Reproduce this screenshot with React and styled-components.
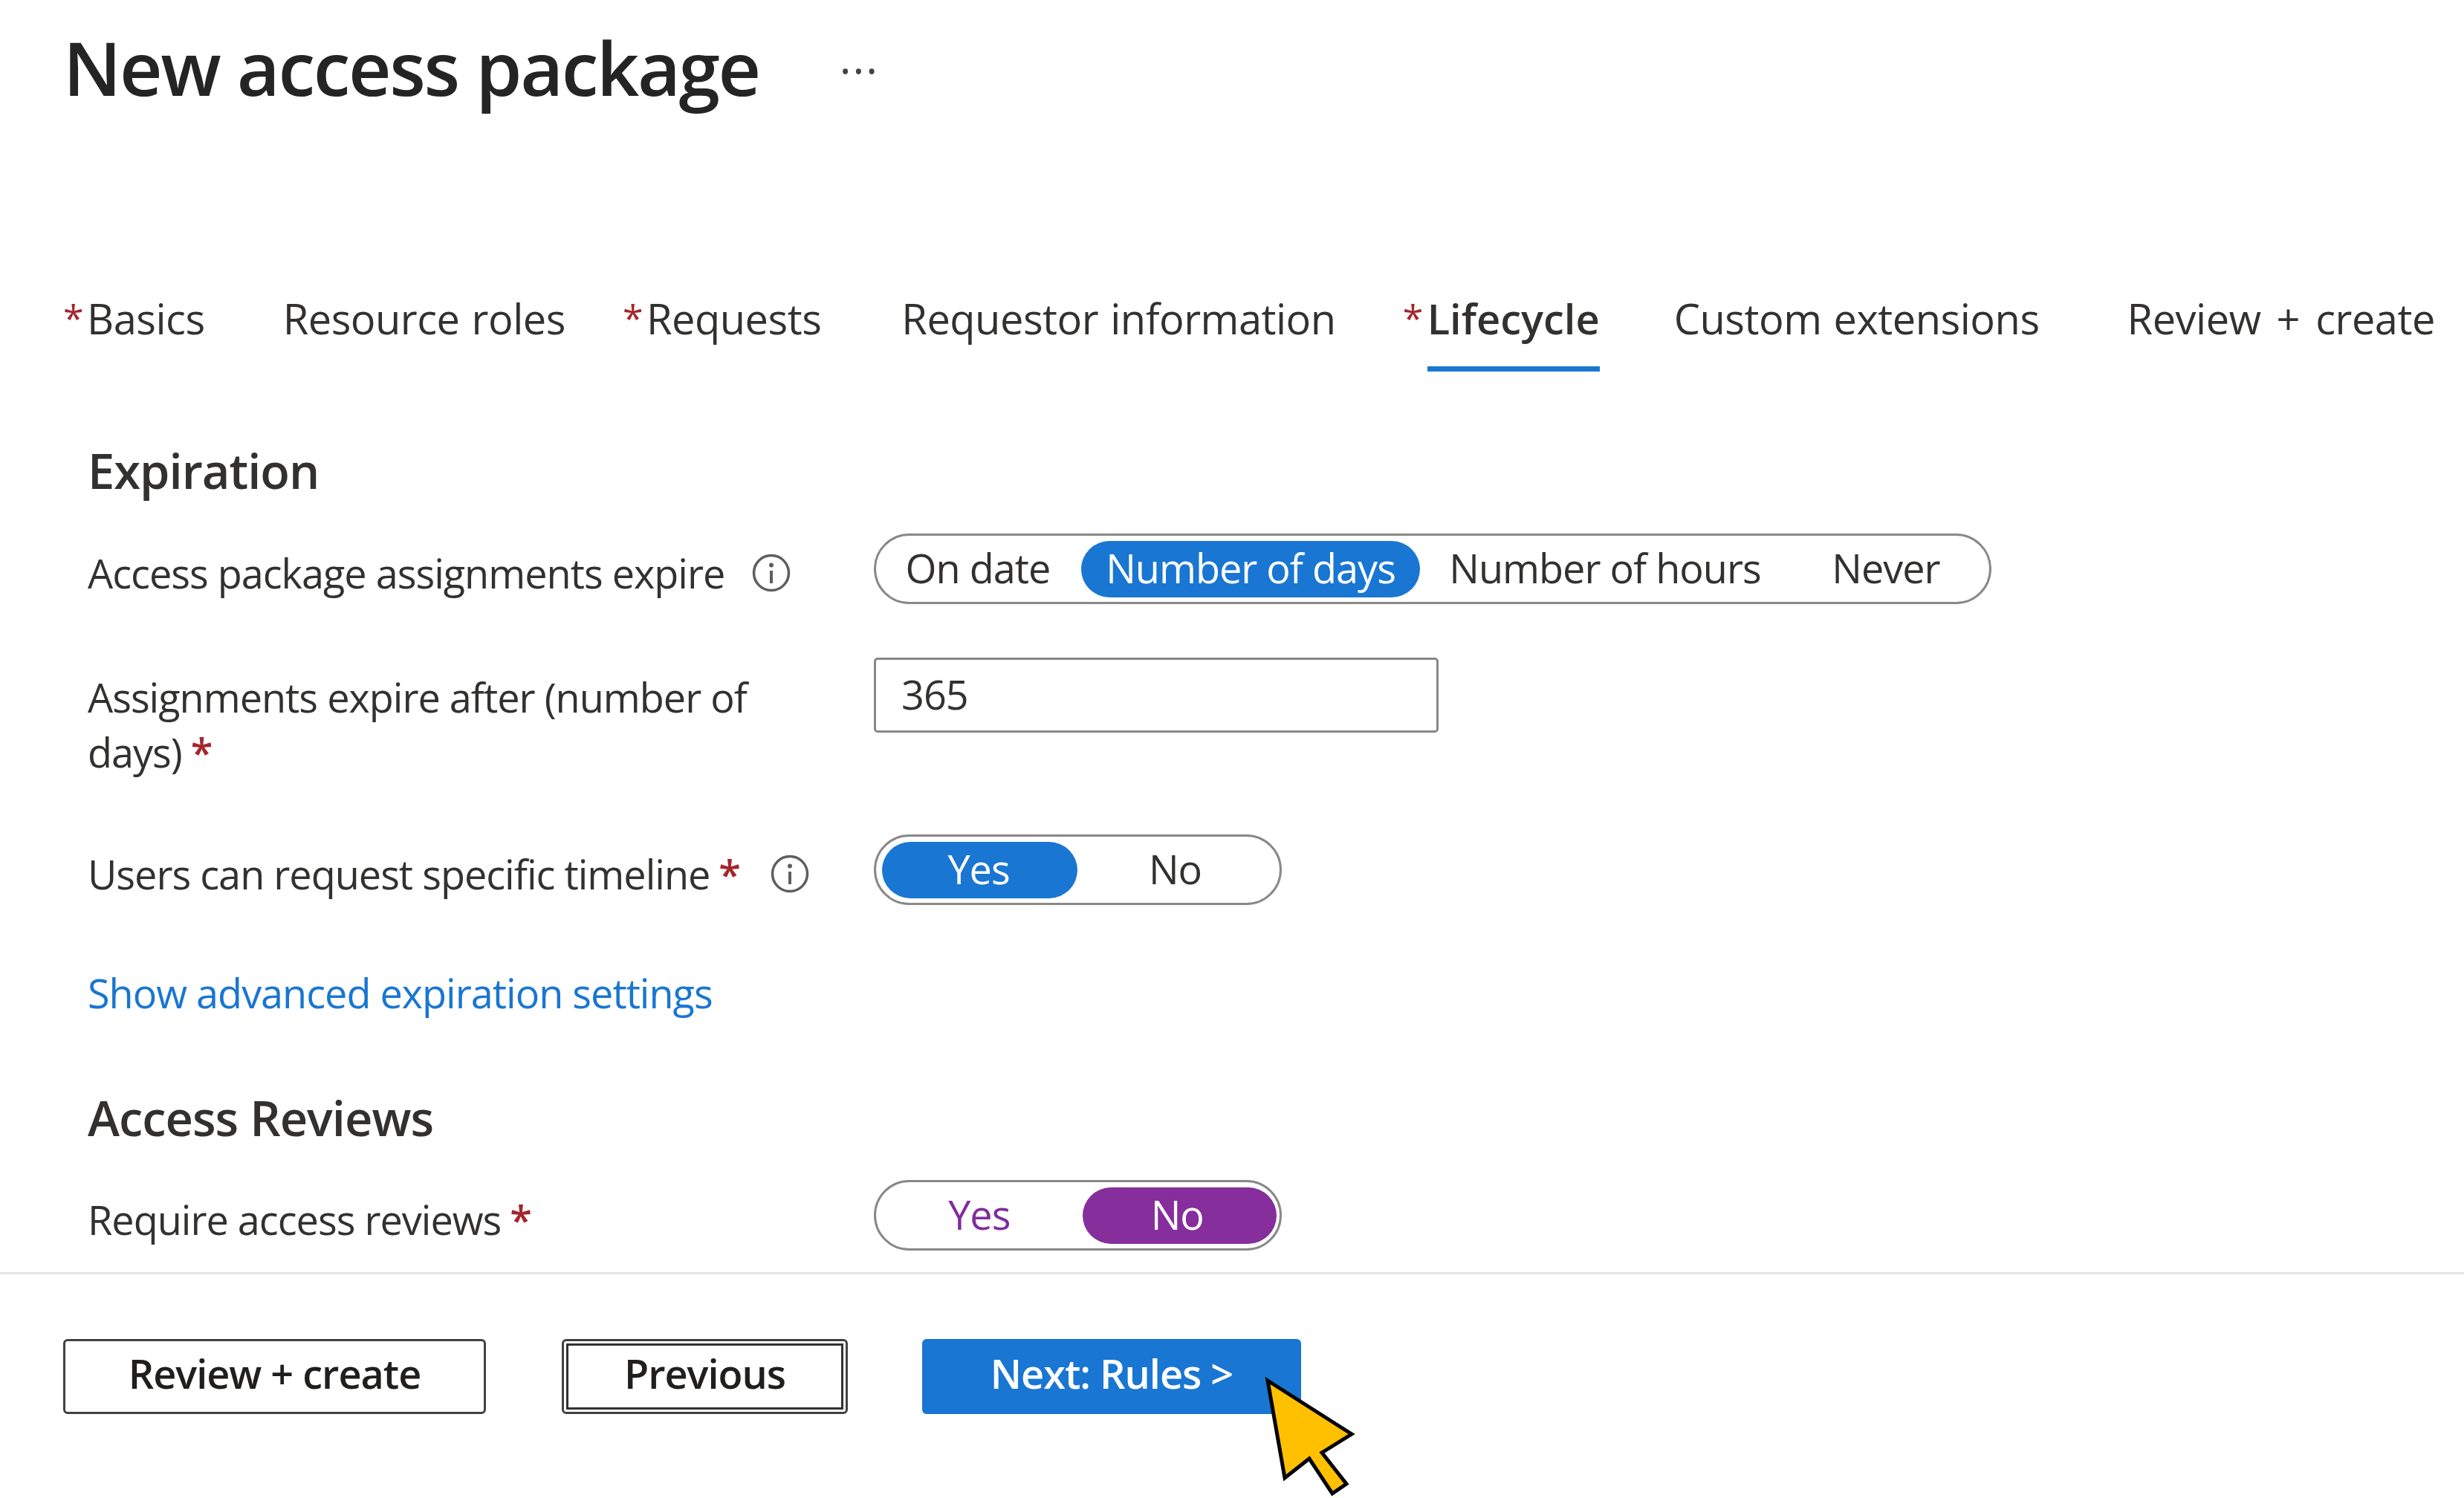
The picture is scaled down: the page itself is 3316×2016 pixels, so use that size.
import React from 'react';
import styled, { createGlobalStyle } from 'styled-components';

const GlobalStyle = createGlobalStyle`
  html, body {
    margin: 0;
    padding: 0;
    background: #fff;
  }
  body {
    font-family: "Open Sans", "Noto Sans", "Liberation Sans", sans-serif;
    color: #323130;
  }
`;

const Page = styled.div`
  position: relative;
  width: 3316px;
  height: 2016px;
  overflow: hidden;
  background: #fff;
`;

const Header = styled.header`
  display: flex;
  align-items: center;
  height: 188px;
  padding-left: 85px;
`;

const Title = styled.h1`
  margin: -8px 0 0;
  font-size: 100px;
  font-weight: 600;
  letter-spacing: -2.4px;
  color: #242424;
  line-height: 188px;
`;

const More = styled.span`
  margin-left: 108px;
  margin-top: 0;
  font-size: 60px;
  letter-spacing: 2px;
  line-height: 1;
  color: #424242;
`;

const Tabs = styled.nav`
  display: flex;
  margin-top: 190px;
  height: 122px;
  padding-left: 85px;
`;

const Tab = styled.div`
  display: flex;
  margin-left: ${(p) => p.$gap}px;
  height: 122px;
  font-size: 56px;
  letter-spacing: ${(p) => (p.$active ? 0 : -0.5)}px;
  word-spacing: ${(p) => p.$wordGap || 2}px;
  line-height: 100px;
  font-weight: ${(p) => (p.$active ? 600 : 400)};
  color: #323130;
`;

const TabStar = styled.span`
  width: ${(p) => (p.$active ? 33 : 32)}px;
  font-size: 50px;
  color: #a4262c;
  font-weight: 400;
`;

const TabLabel = styled.span`
  display: block;
  height: 122px;
  box-sizing: border-box;
  ${(p) => p.$active && 'border-bottom: 7px solid #1976d2;'}
`;

const Form = styled.main`
  padding-left: 118px;
`;

const SectionTitle = styled.h2`
  margin: ${(p) => p.$top}px 0 0;
  font-size: 65px;
  font-weight: 600;
  letter-spacing: -1px;
  line-height: 84px;
  color: #323130;
`;

const Row = styled.div`
  display: grid;
  grid-template-columns: 1058px auto;
  align-items: start;
  margin-top: ${(p) => p.$top}px;
`;

const Label = styled.label`
  display: flex;
  align-items: center;
  width: 1010px;
  padding-top: ${(p) => p.$pad}px;
  font-size: 54px;
  letter-spacing: -1px;
  line-height: 74px;
  color: #323130;
`;

const Star = styled.span`
  color: #a4262c;
  font-weight: 600;
  margin-left: 12px;
`;

const InfoIcon = styled.svg`
  width: 54px;
  height: 54px;
  margin-left: ${(p) => p.$gap}px;
  flex: none;
`;

const Pill = styled.div`
  box-sizing: border-box;
  display: flex;
  align-items: center;
  width: ${(p) => p.$width}px;
  height: 95px;
  padding: 0 4px 0 8px;
  border: 3px solid #8a8886;
  border-radius: 48px;
  background: #fff;
`;

const Segment = styled.div`
  display: flex;
  align-items: center;
  justify-content: center;
  box-sizing: border-box;
  width: ${(p) => p.$width}px;
  margin-left: ${(p) => p.$gap || 0}px;
  height: 76px;
  padding-bottom: 4px;
  padding-right: ${(p) => p.$nudge || 0}px;
  border-radius: 38px;
  font-size: 54px;
  font-weight: ${(p) => (p.$bg ? 500 : 400)};
  letter-spacing: -1px;
  background: ${(p) => p.$bg || 'transparent'};
  color: ${(p) => p.$color || '#323130'};
`;

const Input = styled.div`
  box-sizing: border-box;
  display: flex;
  align-items: center;
  width: 760px;
  height: 101px;
  padding: 0 0 4px 34px;
  border: 3px solid #8a8886;
  border-radius: 5px;
  font-size: 54px;
  letter-spacing: -1px;
  color: #323130;
`;

const AdvancedLink = styled.a`
  display: block;
  margin-top: 80px;
  font-size: 54px;
  letter-spacing: -1px;
  line-height: 76px;
  color: #1976d2;
`;

const Footer = styled.footer`
  position: absolute;
  left: 0;
  right: 0;
  bottom: 0;
  height: 304px;
  display: flex;
  align-items: flex-start;
  box-sizing: border-box;
  padding: 87px 0 0 85px;
  border-top: 3px solid #e5e5e5;
`;

const Button = styled.button`
  box-sizing: border-box;
  width: ${(p) => p.$width}px;
  height: 101px;
  margin-right: ${(p) => p.$gap}px;
  padding: 0 0 10px;
  border: ${(p) => (p.$primary ? '0' : '3px solid #424242')};
  border-radius: 6px;
  background: ${(p) => (p.$primary ? '#1976d2' : '#fff')};
  color: ${(p) => (p.$primary ? '#fff' : '#201f1e')};
  font-family: inherit;
  font-size: 54px;
  font-weight: 600;
  letter-spacing: -1px;
  ${(p) => p.$focused && 'outline: 3px solid #323130; outline-offset: -9px;'}
`;

const Cursor = styled.svg`
  position: absolute;
  left: 1695px;
  top: 1845px;
  width: 140px;
  height: 171px;
`;

const tabs = [
  { label: 'Basics', star: true, gap: 0 },
  { label: 'Resource roles', gap: 105 },
  { label: 'Requests', star: true, gap: 77 },
  { label: 'Requestor information', gap: 108 },
  { label: 'Lifecycle', star: true, gap: 90, active: true },
  { label: 'Custom extensions', gap: 100 },
  { label: 'Review + create', gap: 118, wordGap: 7 },
];

const Info = ({ gap }) => (
  <InfoIcon $gap={gap} viewBox="0 0 54 54" fill="none">
    <circle cx="27" cy="27" r="23.5" stroke="#605e5c" strokeWidth="3.5" />
    <circle cx="27" cy="16.5" r="3" fill="#605e5c" />
    <path d="M27 24v17" stroke="#605e5c" strokeWidth="4" />
  </InfoIcon>
);

const App = () => (
  <Page>
    <GlobalStyle />
    <Header>
      <Title>New access package</Title>
      <More>···</More>
    </Header>
    <Tabs>
      {tabs.map((tab) => (
        <Tab key={tab.label} $gap={tab.gap} $active={tab.active} $wordGap={tab.wordGap}>
          {tab.star && <TabStar $active={tab.active}>*</TabStar>}
          <TabLabel $active={tab.active}>{tab.label}</TabLabel>
        </Tab>
      ))}
    </Tabs>
    <Form>
      <SectionTitle $top={91}>Expiration</SectionTitle>
      <Row $top={43}>
        <Label $pad={16}>
          Access package assignments expire
          <Info gap={36} />
        </Label>
        <Pill $width={1504}>
          <Segment $width={258}>On date</Segment>
          <Segment $width={456} $gap={10} $bg="#1976d2" $color="#fff">Number of days</Segment>
          <Segment $width={498}>Number of hours</Segment>
          <Segment $width={258}>Never</Segment>
        </Pill>
      </Row>
      <Row $top={72}>
        <Label $pad={16} as="div">
          <span>
            Assignments expire after (number of days)
            <Star>*</Star>
          </span>
        </Label>
        <Input>365</Input>
      </Row>
      <Row $top={74}>
        <Label $pad={16}>
          Users can request specific timeline
          <Star>*</Star>
          <Info gap={40} />
        </Label>
        <Pill $width={549}>
          <Segment $width={263} $nudge={3} $bg="#1976d2" $color="#fff">Yes</Segment>
          <Segment $width={263}>No</Segment>
        </Pill>
      </Row>
      <AdvancedLink>Show advanced expiration settings</AdvancedLink>
      <SectionTitle $top={88}>Access Reviews</SectionTitle>
      <Row $top={42}>
        <Label $pad={16}>
          Require access reviews
          <Star>*</Star>
        </Label>
        <Pill $width={549}>
          <Segment $width={262}  $color="#7f2d9e">Yes</Segment>
          <Segment $width={262} $gap={8} $nudge={6} $bg="#862e9c" $color="#fff">No</Segment>
        </Pill>
      </Row>
    </Form>
    <Footer>
      <Button $width={569} $gap={102}>Review + create</Button>
      <Button $width={385} $gap={100} $focused>Previous</Button>
      <Button $width={510} $gap={0} $primary>Next: Rules &gt;</Button>
    </Footer>
    <Cursor viewBox="1695 1845 140 171">
      <path
        d="M1706 1858 L1819 1930 L1779 1955 L1812 1997 L1793 2010 L1762 1963 L1729 1989 Z"
        fill="#ffc000"
        stroke="#000"
        strokeWidth="5"
      />
    </Cursor>
  </Page>
);

export default App;
